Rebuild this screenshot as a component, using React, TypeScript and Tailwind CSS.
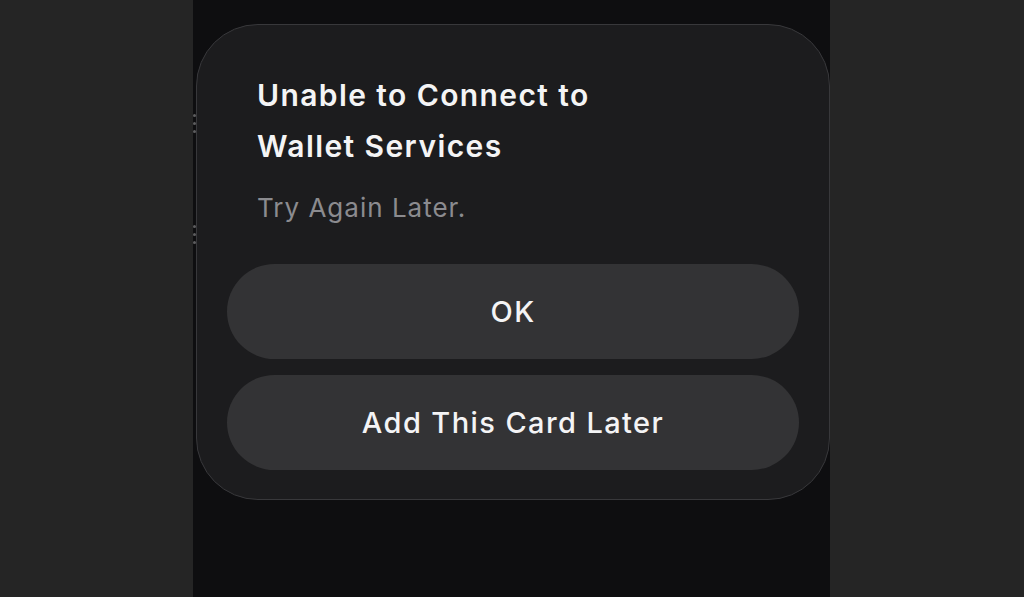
export default function App() {
  const font = { fontFamily: 'Inter, "Noto Sans", "Liberation Sans", sans-serif' };

  return (
    <div className="flex h-[597px] w-[1024px] overflow-hidden bg-[#252525]" style={font}>
      {/* left margin */}
      <div className="w-[193px] shrink-0 bg-[#252525]" />

      {/* phone screen */}
      <div className="relative flex w-[637px] shrink-0 flex-col bg-[#0e0e10]">
        {/* side button hints */}
        <div className="absolute left-[0px] top-[114px] flex flex-col gap-[5px]">
          <span className="h-[3px] w-[3px] rounded-full bg-[#5e5e60]" />
          <span className="h-[3px] w-[3px] rounded-full bg-[#5e5e60]" />
          <span className="h-[3px] w-[3px] rounded-full bg-[#5e5e60]" />
        </div>
        <div className="absolute left-[0px] top-[225px] flex flex-col gap-[5px]">
          <span className="h-[3px] w-[3px] rounded-full bg-[#5e5e60]" />
          <span className="h-[3px] w-[3px] rounded-full bg-[#5e5e60]" />
          <span className="h-[3px] w-[3px] rounded-full bg-[#5e5e60]" />
        </div>

        {/* alert */}
        <div className="ml-[3px] mt-[24px] w-[634px] rounded-[62px] border border-[#38383b] bg-[#1c1c1e] px-[30px] pb-[29px] pt-[45px]">
          <div className="pl-[30px]">
            <h1 className="text-[30px] font-semibold leading-[51px] tracking-[1.4px] text-[#f4f4f5]">
              Unable to Connect to
              <br />
              Wallet Services
            </h1>
            <p className="mt-[19px] text-[26px] leading-[34px] tracking-[1px] text-[#8b8b8f]">Try Again Later.</p>
          </div>

          <div className="mt-[39px] flex flex-col gap-[16px]">
            <button className="flex h-[95px] w-full items-center justify-center rounded-full bg-[#333335] text-[29px] font-medium tracking-[1.4px] text-[#f4f4f5]">
              OK
            </button>
            <button className="flex h-[95px] w-full items-center justify-center rounded-full bg-[#333335] text-[29px] font-medium tracking-[1.4px] text-[#f4f4f5]">
              Add This Card Later
            </button>
          </div>
        </div>
      </div>

      {/* right margin */}
      <div className="flex-1 bg-[#252525]" />
    </div>
  );
}
